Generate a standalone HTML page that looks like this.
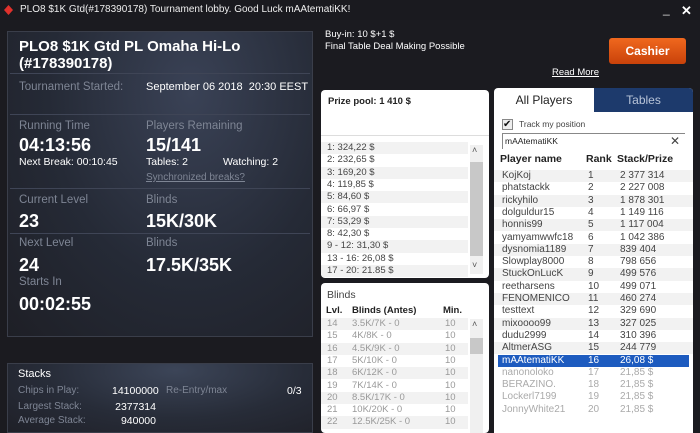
<!DOCTYPE html>
<html><head><meta charset="utf-8"><style>
*{margin:0;padding:0;box-sizing:border-box}
body{width:700px;height:424px;overflow:hidden;background:#1b1b20;font-family:"Liberation Sans",sans-serif;position:relative;color:#fff}
.a{position:absolute;white-space:nowrap}
.lbl{color:#7e8594;font-size:11.5px}
.big{font-weight:bold;font-size:18px;color:#fff}
.w{color:#fff;font-size:10.5px}
.card{position:absolute;background:#fff;border-radius:4px;overflow:hidden}
.row{position:absolute;left:0;right:0;height:12.3px;font-size:9.5px;line-height:12.3px;color:#444}
.row span{position:absolute}
.alt{background:#f2f2f2}
</style></head><body>
<div class="a" style="left:0;top:0;width:700px;height:20px;background:#1a1a1f"></div>
<svg class="a" style="left:4px;top:5px" width="9" height="10"><path d="M4.5 0 L9 5 L4.5 10 L0 5Z" fill="#e0312c"/></svg>
<div class="a w" style="left:20px;top:4px;font-size:10px;color:#eee">PLO8 $1K Gtd(#178390178) Tournament lobby. Good Luck mAAtematiKK!</div>
<div class="a" style="left:663px;top:2px;font-size:12px;color:#ddd">_</div>
<div class="a" style="left:681px;top:3px;font-size:13px;color:#fff;font-weight:bold">✕</div>

<div class="a" style="left:7px;top:31px;width:306px;height:306px;border:1px solid #3a3e4a;background:radial-gradient(ellipse at 60% 20%,#3a4256 0%,#252a36 55%,#1e1f26 100%)"></div>
<div class="a big" style="left:19px;top:38px;font-size:15px;line-height:17px">PLO8 $1K Gtd PL Omaha Hi-Lo<br>(#178390178)</div>
<div class="a" style="left:10px;top:73px;width:300px;height:1px;background:#3f4556"></div>
<div class="a lbl" style="left:19px;top:81px">Tournament Started:</div>
<div class="a w" style="left:146px;top:81px;font-size:11px">September 06 2018&nbsp; 20:30 EEST</div>
<div class="a" style="left:10px;top:114px;width:300px;height:1px;background:#3f4556"></div>
<div class="a lbl" style="left:19px;top:120px">Running Time</div>
<div class="a lbl" style="left:146px;top:120px">Players Remaining</div>
<div class="a big" style="left:19px;top:135px">04:13:56</div>
<div class="a big" style="left:146px;top:135px">15/141</div>
<div class="a w" style="left:19px;top:156px">Next Break: 00:10:45</div>
<div class="a w" style="left:146px;top:156px">Tables: 2</div>
<div class="a w" style="left:223px;top:156px">Watching: 2</div>
<div class="a" style="left:146px;top:172px;font-size:10px;color:#7e8594;text-decoration:underline">Synchronized breaks?</div>
<div class="a" style="left:10px;top:188px;width:300px;height:1px;background:#3f4556"></div>
<div class="a lbl" style="left:19px;top:194px">Current Level</div>
<div class="a lbl" style="left:146px;top:194px">Blinds</div>
<div class="a big" style="left:19px;top:211px">23</div>
<div class="a big" style="left:146px;top:211px">15K/30K</div>
<div class="a" style="left:10px;top:233px;width:300px;height:1px;background:#3f4556"></div>
<div class="a lbl" style="left:19px;top:237px">Next Level</div>
<div class="a lbl" style="left:146px;top:237px">Blinds</div>
<div class="a big" style="left:19px;top:255px">24</div>
<div class="a big" style="left:146px;top:255px">17.5K/35K</div>
<div class="a lbl" style="left:19px;top:276px">Starts In</div>
<div class="a big" style="left:19px;top:294px">00:02:55</div>

<div class="a" style="left:7px;top:363px;width:306px;height:70px;border:1px solid #3a3e4a;background:radial-gradient(ellipse at 55% 10%,#3c4558 0%,#272c38 55%,#1f2028 100%)"></div>
<div class="a w" style="left:18px;top:368px;font-size:11px">Stacks</div>
<div class="a lbl" style="left:18px;top:385px;font-size:10px">Chips in Play:</div>
<div class="a lbl" style="left:18px;top:401px;font-size:10px">Largest Stack:</div>
<div class="a lbl" style="left:18px;top:415px;font-size:10px">Average Stack:</div>
<div class="a w" style="left:112px;top:385px;width:44px;text-align:right">14100000</div>
<div class="a w" style="left:112px;top:401px;width:44px;text-align:right">2377314</div>
<div class="a w" style="left:112px;top:415px;width:44px;text-align:right">940000</div>
<div class="a lbl" style="left:166px;top:385px;font-size:10px">Re-Entry/max</div>
<div class="a w" style="left:287px;top:385px">0/3</div>

<div class="a w" style="left:325px;top:29px;font-size:9.5px">Buy-in: 10 $+1 $</div>
<div class="a w" style="left:325px;top:41px;font-size:9.5px">Final Table Deal Making Possible</div>
<div class="a" style="left:609px;top:38px;width:77px;height:26px;border-radius:3px;background:linear-gradient(#f0681e,#c9420a);color:#fff;font-weight:bold;font-size:12px;text-align:center;line-height:26px">Cashier</div>
<div class="a w" style="left:552px;top:67px;font-size:9.5px;text-decoration:underline">Read More</div>

<div class="card" style="left:321px;top:90px;width:168px;height:188px">
<div class="a" style="left:7px;top:6px;font-size:9.5px;font-weight:bold;color:#222">Prize pool: 1 410 $</div>
<div class="a" style="left:0;top:45px;width:168px;height:1px;background:#ddd"></div>
<div class="a" style="left:0;top:52px;width:147px;height:136px">
<div class="row alt" style="top:0"><span style="left:6px">1: 324,22 $</span></div>
<div class="row" style="top:12.3px"><span style="left:6px">2: 232,65 $</span></div>
<div class="row alt" style="top:24.6px"><span style="left:6px">3: 169,20 $</span></div>
<div class="row" style="top:36.9px"><span style="left:6px">4: 119,85 $</span></div>
<div class="row alt" style="top:49.2px"><span style="left:6px">5: 84,60 $</span></div>
<div class="row" style="top:61.5px"><span style="left:6px">6: 66,97 $</span></div>
<div class="row alt" style="top:73.8px"><span style="left:6px">7: 53,29 $</span></div>
<div class="row" style="top:86.1px"><span style="left:6px">8: 42,30 $</span></div>
<div class="row alt" style="top:98.4px"><span style="left:6px">9 - 12: 31,30 $</span></div>
<div class="row" style="top:110.7px"><span style="left:6px">13 - 16: 26,08 $</span></div>
<div class="row alt" style="top:123px"><span style="left:6px">17 - 20: 21.85 $</span></div>
</div>
<div class="a" style="left:149px;top:55px;width:13px;height:129px;background:#f0f0f0"></div>
<div class="a" style="left:149px;top:72px;width:13px;height:94px;background:#c8c8c8"></div>
<div class="a" style="left:151px;top:55px;font-size:9px;color:#555">˄</div>
<div class="a" style="left:151px;top:170px;font-size:9px;color:#555">˅</div>
</div>

<div class="card" style="left:321px;top:283px;width:168px;height:150px">
<div class="a" style="left:6px;top:6px;font-size:10.5px;color:#444">Blinds</div>
<div class="a" style="left:5px;top:22px;font-size:9.5px;font-weight:bold;color:#222">Lvl.</div>
<div class="a" style="left:31px;top:22px;font-size:9.5px;font-weight:bold;color:#222">Blinds (Antes)</div>
<div class="a" style="left:122px;top:22px;font-size:9.5px;font-weight:bold;color:#222">Min.</div>
<div class="a" style="left:0;top:35px;width:147px;height:120px;color:#999">
<div class="row alt" style="top:0;color:#999"><span style="left:6px">14</span><span style="left:31px">3.5K/7K - 0</span><span style="left:124px">10</span></div>
<div class="row" style="top:12.3px;color:#999"><span style="left:6px">15</span><span style="left:31px">4K/8K - 0</span><span style="left:124px">10</span></div>
<div class="row alt" style="top:24.6px;color:#999"><span style="left:6px">16</span><span style="left:31px">4.5K/9K - 0</span><span style="left:124px">10</span></div>
<div class="row" style="top:36.9px;color:#999"><span style="left:6px">17</span><span style="left:31px">5K/10K - 0</span><span style="left:124px">10</span></div>
<div class="row alt" style="top:49.2px;color:#999"><span style="left:6px">18</span><span style="left:31px">6K/12K - 0</span><span style="left:124px">10</span></div>
<div class="row" style="top:61.5px;color:#999"><span style="left:6px">19</span><span style="left:31px">7K/14K - 0</span><span style="left:124px">10</span></div>
<div class="row alt" style="top:73.8px;color:#999"><span style="left:6px">20</span><span style="left:31px">8.5K/17K - 0</span><span style="left:124px">10</span></div>
<div class="row" style="top:86.1px;color:#999"><span style="left:6px">21</span><span style="left:31px">10K/20K - 0</span><span style="left:124px">10</span></div>
<div class="row alt" style="top:98.4px;color:#999"><span style="left:6px">22</span><span style="left:31px">12.5K/25K - 0</span><span style="left:124px">10</span></div>
</div>
<div class="a" style="left:149px;top:36px;width:13px;height:114px;background:#f0f0f0"></div>
<div class="a" style="left:149px;top:55px;width:13px;height:16px;background:#c8c8c8"></div>
<div class="a" style="left:151px;top:36px;font-size:9px;color:#555">˄</div>
</div>

<div class="card" style="left:494px;top:88px;width:199px;height:345px;border-radius:4px 4px 0 0">
<div class="a" style="left:100px;top:0;width:99px;height:24px;background:#1d3a6c"></div>
<div class="a" style="left:0;top:5px;width:100px;text-align:center;font-size:12px;color:#222">All Players</div>
<div class="a" style="left:100px;top:5px;width:99px;text-align:center;font-size:12px;color:#b8c4d8">Tables</div>
<div class="a" style="left:8px;top:31px;width:11px;height:11px;border:1px solid #888;background:#eee;font-size:10px;line-height:9px;color:#111">✔</div>
<div class="a" style="left:25px;top:31px;font-size:8.5px;color:#444">Track my position</div>
<div class="a" style="left:8px;top:45px;width:183px;height:16px;border:1px solid #888;border-right:none;border-bottom:none"></div>
<div class="a" style="left:11px;top:48px;font-size:8.5px;color:#222">mAAtematiKK</div>
<div class="a" style="left:176px;top:46px;font-size:12px;color:#444">✕</div>
<div class="a" style="left:6px;top:65px;font-size:10.5px;font-weight:bold;color:#222">Player name</div>
<div class="a" style="left:92px;top:65px;font-size:10.5px;font-weight:bold;color:#222">Rank</div>
<div class="a" style="left:123px;top:65px;font-size:10.5px;font-weight:bold;color:#222">Stack/Prize</div>
<div class="a" style="left:0;top:82px;width:199px;height:260px">
<div class="row alt" style="top:0;font-size:10px"><span style="left:8px">KojKoj</span><span style="left:94px">1</span><span style="left:126px">2 377 314</span></div>
<div class="row" style="top:12.3px;font-size:10px"><span style="left:8px">phatstackk</span><span style="left:94px">2</span><span style="left:126px">2 227 008</span></div>
<div class="row alt" style="top:24.6px;font-size:10px"><span style="left:8px">rickyhilo</span><span style="left:94px">3</span><span style="left:126px">1 878 301</span></div>
<div class="row" style="top:36.9px;font-size:10px"><span style="left:8px">dolguldur15</span><span style="left:94px">4</span><span style="left:126px">1 149 116</span></div>
<div class="row alt" style="top:49.2px;font-size:10px"><span style="left:8px">honnis99</span><span style="left:94px">5</span><span style="left:126px">1 117 004</span></div>
<div class="row" style="top:61.5px;font-size:10px"><span style="left:8px">yamyamwwfc18</span><span style="left:94px">6</span><span style="left:126px">1 042 386</span></div>
<div class="row alt" style="top:73.8px;font-size:10px"><span style="left:8px">dysnomia1189</span><span style="left:94px">7</span><span style="left:126px">839 404</span></div>
<div class="row" style="top:86.1px;font-size:10px"><span style="left:8px">Slowplay8000</span><span style="left:94px">8</span><span style="left:126px">798 656</span></div>
<div class="row alt" style="top:98.4px;font-size:10px"><span style="left:8px">StuckOnLucK</span><span style="left:94px">9</span><span style="left:126px">499 576</span></div>
<div class="row" style="top:110.7px;font-size:10px"><span style="left:8px">reetharsens</span><span style="left:94px">10</span><span style="left:126px">499 071</span></div>
<div class="row alt" style="top:123px;font-size:10px"><span style="left:8px">FENOMENICO</span><span style="left:94px">11</span><span style="left:126px">460 274</span></div>
<div class="row" style="top:135.3px;font-size:10px"><span style="left:8px">testtext</span><span style="left:94px">12</span><span style="left:126px">329 690</span></div>
<div class="row alt" style="top:147.6px;font-size:10px"><span style="left:8px">mixoooo99</span><span style="left:94px">13</span><span style="left:126px">327 025</span></div>
<div class="row" style="top:159.9px;font-size:10px"><span style="left:8px">dudu2999</span><span style="left:94px">14</span><span style="left:126px">310 396</span></div>
<div class="row alt" style="top:172.2px;font-size:10px"><span style="left:8px">AltmerASG</span><span style="left:94px">15</span><span style="left:126px">244 779</span></div>
<div class="row" style="top:184.5px;font-size:10px;background:#1d5bbf;color:#fff;left:4px;right:4px"><span style="left:4px">mAAtematiKK</span><span style="left:90px">16</span><span style="left:122px">26,08 $</span></div>
<div class="row" style="top:196.8px;font-size:10px;color:#aaa"><span style="left:8px">nanonoloko</span><span style="left:94px">17</span><span style="left:126px">21,85 $</span></div>
<div class="row" style="top:209.1px;font-size:10px;color:#aaa"><span style="left:8px">BERAZINO.</span><span style="left:94px">18</span><span style="left:126px">21,85 $</span></div>
<div class="row" style="top:221.4px;font-size:10px;color:#aaa"><span style="left:8px">Lockerl7199</span><span style="left:94px">19</span><span style="left:126px">21,85 $</span></div>
<div class="row" style="top:233.7px;font-size:10px;color:#aaa"><span style="left:8px">JonnyWhite21</span><span style="left:94px">20</span><span style="left:126px">21,85 $</span></div>
</div>
</div>
</body></html>
